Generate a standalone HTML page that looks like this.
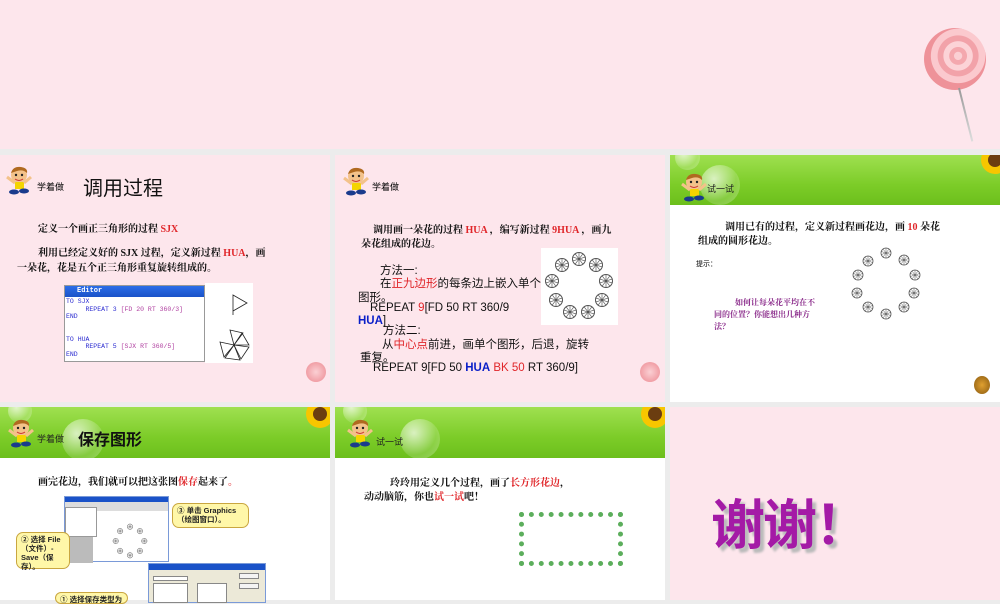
<!DOCTYPE html>
<html><head><meta charset="utf-8">
<style>
*{margin:0;padding:0;box-sizing:border-box}
body{width:1000px;height:600px;background:#ececec;position:relative;overflow:hidden;font-family:"Liberation Sans","Noto Sans CJK SC",sans-serif}
.a{position:absolute}
.pink{background:#fde6ec}
.white{background:#fff}
.green{background:linear-gradient(180deg,#9fe050 0%,#7ccc28 60%,#6cbf1c 100%)}
.serif{font-family:"Liberation Serif","Noto Serif CJK SC",serif;font-weight:bold;color:#111}
.r{color:#e0262a}
.b{color:#0a1fc8;font-weight:bold}
.t{white-space:nowrap}
.kid{position:absolute;width:28px;height:30px}
.mono{font-family:"Liberation Mono",monospace;font-size:6.5px;color:#2b2bd0;white-space:pre;line-height:7.5px}
.bub{position:absolute;border-radius:50%;background:radial-gradient(circle at 35% 35%,rgba(255,255,255,.7),rgba(255,255,255,.15) 60%,rgba(255,255,255,.35));}
.callout{position:absolute;background:#fff7a8;border:1px solid #c9a640;border-radius:7px;font-size:7.5px;font-weight:bold;color:#222;line-height:9px;padding:2px 4px}
.s2{font-size:11.5px;color:#111}
</style></head><body>

<svg width="0" height="0" style="position:absolute">
<defs>
<g id="kid">
<circle cx="14" cy="10" r="8" fill="#f3c28a"/>
<path d="M6 8 Q8 1 16 2 Q23 3 22 8 Q18 4 12 6 Z" fill="#b06a20"/>
<circle cx="11" cy="10" r="1.2" fill="#222"/><circle cx="17" cy="10" r="1.2" fill="#222"/>
<path d="M10 14 Q14 17 18 14" stroke="#c33" fill="none"/>
<rect x="10" y="17" width="9" height="7" fill="#f4d400"/>
<path d="M2 12 L10 18" stroke="#f3c28a" stroke-width="3"/><path d="M26 12 L19 18" stroke="#f3c28a" stroke-width="3"/>
<ellipse cx="9" cy="27" rx="5" ry="2.5" fill="#1a3b8c"/><ellipse cx="19" cy="26" rx="5" ry="2.5" fill="#1a3b8c"/>
</g>
<g id="fl"><circle r="5" fill="#fff" stroke="#555" stroke-width=".8"/><path d="M0 -5L0 5M-4.7 -1.5L4.7 1.5M-3 4L3 -4M-4.7 1.5L4.7 -1.5M3 4L-3 -4" stroke="#555" stroke-width=".5"/></g>
<g id="sun"><circle r="14" fill="#f7c600"/><circle r="7" fill="#6b3d10"/></g>
</defs></svg>

<!-- top slide -->
<div class="a pink" style="left:0;top:0;width:1000px;height:149px"></div>
<div class="a" style="left:924px;top:28px;width:62px;height:62px;border-radius:50%;background:radial-gradient(circle at 55% 45%,#fbd0d4 0 8%,#f4a8ae 9% 18%,#fcd3d7 19% 30%,#f2a2a9 31% 42%,#fbc9ce 43% 56%,#ee9299 57% 100%)"></div>
<div class="a" style="left:958px;top:88px;width:2px;height:55px;background:linear-gradient(#999,#ddd);transform:rotate(-14deg);transform-origin:top"></div>

<!-- slide 1 -->
<div class="a pink" style="left:0;top:155px;width:330px;height:247px"></div>
<svg class="kid" style="left:5px;top:165px"><use href="#kid"/></svg>
<div class="a t" style="left:37px;top:180px;font-size:9px">学着做</div>
<div class="a t" style="left:83px;top:172px;font-size:20px;color:#111">调用过程</div>
<div class="a t serif" style="left:38px;top:220px;font-size:10px">定义一个画正三角形的过程 <span class="r">SJX</span></div>
<div class="a t serif" style="left:38px;top:244px;font-size:10px">利用已经定义好的 SJX 过程，定义新过程 <span class="r">HUA</span>，画</div>
<div class="a t serif" style="left:17px;top:259px;font-size:10px">一朵花，花是五个正三角形重复旋转组成的。</div>
<div class="a" style="left:64px;top:285px;width:141px;height:77px;background:#fff;border:1px solid #999">
 <div style="height:11px;background:linear-gradient(#2c6ee8,#1a52c8);color:#fff;font-size:7px;font-weight:bold;padding-left:12px;line-height:11px;font-family:'Liberation Mono',monospace">Editor</div>
 <div class="mono" style="padding:1px 1px">TO SJX
     REPEAT 3 <span style="color:#b040a0">[FD 20 RT 360/3]</span>
END


TO HUA
     REPEAT 5 <span style="color:#b040a0">[SJX RT 360/5]</span>
END</div>
</div>
<div class="a" style="left:205px;top:283px;width:48px;height:80px;background:#fff"></div>
<svg class="a" style="left:205px;top:283px" width="48" height="80"><path d="M28 12 L42 20 L28 28 Z M28 28 L28 32" stroke="#222" fill="none" stroke-width=".8"/><g transform="translate(29,62)" stroke="#222" fill="none" stroke-width=".8"><path d="M0 0 L-4 -15 L9 -12 Z"/><path d="M0 0 L8 -12 L15 0 Z"/><path d="M0 0 L15 2 L7 14 Z"/><path d="M0 0 L6 15 L-9 13 Z"/><path d="M0 0 L-10 12 L-14 -3 Z"/></g></svg>
<div class="a" style="left:306px;top:362px;width:20px;height:20px;border-radius:50%;background:radial-gradient(#fbd0d4,#ec8991)"></div>

<!-- slide 2 -->
<div class="a pink" style="left:335px;top:155px;width:330px;height:247px"></div>
<svg class="kid" style="left:342px;top:166px"><use href="#kid"/></svg>
<div class="a t" style="left:372px;top:180px;font-size:9px">学着做</div>
<div class="a t serif" style="left:373px;top:221px;font-size:10px">调用画一朵花的过程 <span class="r">HUA</span> ，编写新过程 <span class="r">9HUA</span> ，画九</div>
<div class="a t serif" style="left:361px;top:235px;font-size:10px">朵花组成的花边。</div>
<div class="a" style="left:541px;top:248px;width:77px;height:77px;background:#fff"></div>
<svg class="a" style="left:541px;top:248px" width="77" height="77"><g transform="translate(38,38)"><use href="#fl" transform="translate(0,-27) scale(1.3)"/><use href="#fl" transform="translate(17,-21) scale(1.3)"/><use href="#fl" transform="translate(27,-5) scale(1.3)"/><use href="#fl" transform="translate(23,14) scale(1.3)"/><use href="#fl" transform="translate(9,26) scale(1.3)"/><use href="#fl" transform="translate(-9,26) scale(1.3)"/><use href="#fl" transform="translate(-23,14) scale(1.3)"/><use href="#fl" transform="translate(-27,-5) scale(1.3)"/><use href="#fl" transform="translate(-17,-21) scale(1.3)"/></g></svg>
<div class="a t s2" style="left:380px;top:262px">方法一:</div>
<div class="a t s2" style="left:380px;top:275px">在<span class="r">正九边形</span>的每条边上嵌入单个</div>
<div class="a t s2" style="left:358px;top:289px">图形。</div>
<div class="a t s2" style="left:370px;top:302px">REPEAT <span class="r">9</span>[FD 50 RT 360/9</div>
<div class="a t s2" style="left:358px;top:315px"><span class="b">HUA</span>]</div>
<div class="a t s2" style="left:383px;top:322px">方法二:</div>
<div class="a t s2" style="left:382px;top:336px">从<span class="r">中心点</span>前进，画单个图形，后退，旋转</div>
<div class="a t s2" style="left:360px;top:349px">重复。</div>
<div class="a t s2" style="left:373px;top:362px">REPEAT 9[FD 50 <span class="b">HUA</span> <span class="r">BK 50</span> RT 360/9]</div>
<div class="a" style="left:640px;top:362px;width:20px;height:20px;border-radius:50%;background:radial-gradient(#fbd0d4,#ec8991)"></div>

<!-- slide 3 -->
<div class="a white" style="left:670px;top:155px;width:330px;height:247px"></div>
<div class="a green" style="left:670px;top:155px;width:330px;height:50px;overflow:hidden">
 <div class="bub" style="left:30px;top:10px;width:40px;height:40px"></div>
 <div class="bub" style="left:5px;top:-10px;width:25px;height:25px"></div>
 <svg class="a" style="left:300px;top:-5px" width="40" height="40"><use href="#sun" transform="translate(25,10)"/></svg>
</div>
<svg class="kid" style="left:680px;top:172px"><use href="#kid"/></svg>
<div class="a t" style="left:707px;top:182px;font-size:9px;color:#222">试一试</div>
<div class="a t serif" style="left:725px;top:218px;font-size:10px">调用已有的过程，定义新过程画花边，画 <span class="r">10</span> 朵花</div>
<div class="a t serif" style="left:698px;top:232px;font-size:10px">组成的圆形花边。</div>
<div class="a t" style="left:696px;top:259px;font-size:7px">提示：</div>
<div class="a t serif" style="left:735px;top:297px;font-size:8px;color:#8a2a8a">如何让每朵花平均在不</div>
<div class="a t serif" style="left:714px;top:309px;font-size:8px;color:#8a2a8a">同的位置？你能想出几种方</div>
<div class="a t serif" style="left:714px;top:321px;font-size:8px;color:#8a2a8a">法？</div>
<svg class="a" style="left:840px;top:240px" width="90" height="90"><g transform="translate(46,43)"><use href="#fl" transform="translate(0,-30)"/><use href="#fl" transform="translate(18,-23)"/><use href="#fl" transform="translate(29,-8)"/><use href="#fl" transform="translate(28,10)"/><use href="#fl" transform="translate(18,24)"/><use href="#fl" transform="translate(0,31)"/><use href="#fl" transform="translate(-18,24)"/><use href="#fl" transform="translate(-29,10)"/><use href="#fl" transform="translate(-28,-8)"/><use href="#fl" transform="translate(-18,-22)"/></g></svg>
<div class="a" style="left:974px;top:376px;width:16px;height:18px;border-radius:50%;background:radial-gradient(#e0a030,#8a5a10)"></div>

<!-- slide 4 -->
<div class="a white" style="left:0;top:407px;width:330px;height:193px"></div>
<div class="a green" style="left:0;top:407px;width:330px;height:51px;overflow:hidden">
 <div class="bub" style="left:62px;top:12px;width:42px;height:42px"></div>
 <div class="bub" style="left:8px;top:-8px;width:24px;height:24px"></div>
 <svg class="a" style="left:292px;top:-5px" width="40" height="40"><use href="#sun" transform="translate(28,12)"/></svg>
</div>
<svg class="kid" style="left:7px;top:418px"><use href="#kid"/></svg>
<div class="a t" style="left:37px;top:432px;font-size:9px;color:#222">学着做</div>
<div class="a t" style="left:78px;top:426px;font-size:16px;font-weight:bold;color:#111">保存图形</div>
<div class="a t serif" style="left:38px;top:473px;font-size:10px">画完花边，我们就可以把这张图<span class="r">保存</span>起来了<span class="r">。</span></div>
<div class="a" style="left:64px;top:496px;width:105px;height:66px;background:#fff;border:1px solid #7a9ad8">
 <div style="height:5px;background:#1a52c8"></div><div style="height:9px;background:#ddd"></div>
 <div class="a" style="left:0;top:14px;width:28px;height:52px;background:#bbb"></div>
 <div class="a" style="left:0;top:10px;width:32px;height:30px;background:#fff;border:1px solid #999"></div>
 <svg class="a" style="left:45px;top:25px" width="40" height="38"><g transform="translate(20,19) scale(.55)"><use href="#fl" transform="translate(0,-26)"/><use href="#fl" transform="translate(18,-18)"/><use href="#fl" transform="translate(26,0)"/><use href="#fl" transform="translate(18,18)"/><use href="#fl" transform="translate(0,26)"/><use href="#fl" transform="translate(-18,18)"/><use href="#fl" transform="translate(-26,0)"/><use href="#fl" transform="translate(-18,-18)"/></g></svg>
</div>
<div class="a" style="left:148px;top:563px;width:118px;height:40px;background:#ece9d8;border:1px solid #7a9ad8">
 <div style="height:6px;background:#1a52c8"></div>
 <div class="a" style="left:4px;top:12px;width:35px;height:5px;background:#fff;border:1px solid #888"></div>
 <div class="a" style="left:4px;top:19px;width:35px;height:20px;background:#fff;border:1px solid #888"></div>
 <div class="a" style="left:48px;top:19px;width:30px;height:20px;background:#fff;border:1px solid #888"></div>
 <div class="a" style="left:90px;top:9px;width:20px;height:6px;background:#f4f4f4;border:1px solid #888"></div>
 <div class="a" style="left:90px;top:19px;width:20px;height:6px;background:#f4f4f4;border:1px solid #888"></div>
</div>
<div class="callout" style="left:172px;top:503px;width:77px;height:25px">③ 单击 Graphics（绘图窗口）。</div>
<div class="callout" style="left:16px;top:532px;width:54px;height:37px">② 选择 File（文件）-Save（保存）。</div>
<div class="callout" style="left:55px;top:592px;width:73px;height:12px">① 选择保存类型为</div>

<!-- slide 5 -->
<div class="a white" style="left:335px;top:407px;width:330px;height:193px"></div>
<div class="a green" style="left:335px;top:407px;width:330px;height:51px;overflow:hidden">
 <div class="bub" style="left:65px;top:12px;width:40px;height:40px"></div>
 <div class="bub" style="left:8px;top:-8px;width:24px;height:24px"></div>
 <svg class="a" style="left:292px;top:-5px" width="40" height="40"><use href="#sun" transform="translate(28,12)"/></svg>
</div>
<svg class="kid" style="left:346px;top:418px"><use href="#kid"/></svg>
<div class="a t" style="left:376px;top:435px;font-size:9px;color:#222">试一试</div>
<div class="a t serif" style="left:390px;top:474px;font-size:10px">玲玲用定义几个过程，画了<span class="r">长方形花边</span>，</div>
<div class="a t serif" style="left:364px;top:488px;font-size:10px">动动脑筋，你也<span class="r">试一试</span>吧！</div>
<div class="a" style="left:519px;top:512px;width:104px;height:54px;border:5px dotted #5cae5c"></div>

<!-- slide 6 -->
<div class="a pink" style="left:670px;top:407px;width:330px;height:193px"></div>
<div class="a t" style="left:711px;top:496px;font-size:54px;font-weight:bold;color:#a41aa6;text-shadow:4px 4px 2px #bbb;line-height:60px;letter-spacing:-2px">谢谢！</div>
</body></html>
